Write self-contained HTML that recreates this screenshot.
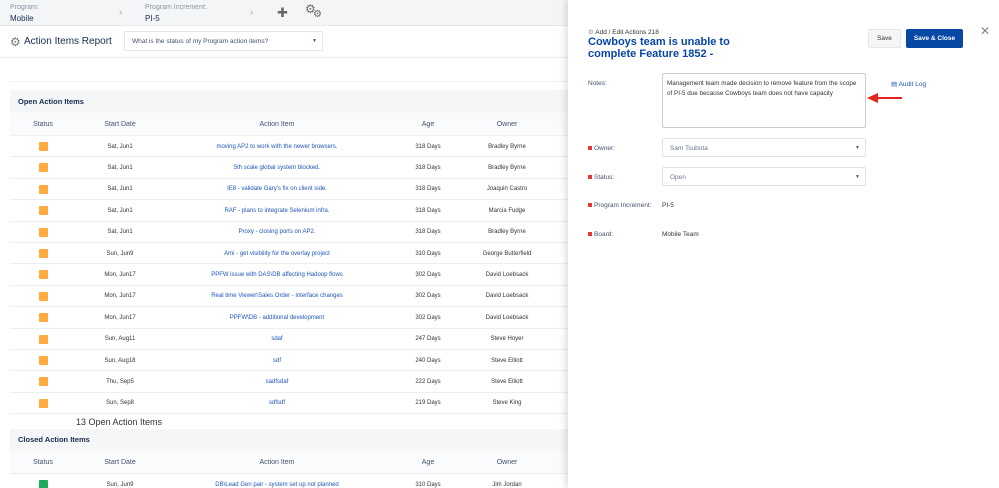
<!DOCTYPE html>
<html><head><style>
*{margin:0;padding:0;box-sizing:border-box}
html,body{width:999px;height:488px;overflow:hidden}
body{font-family:"Liberation Sans",sans-serif;background:#fff;position:relative;color:#172b4d}
.top{position:absolute;left:0;top:0;width:999px;height:26px;background:#f4f5f7;border-bottom:1px solid #e6e8eb}
.lbl{position:absolute;font-size:7px;color:#8a94a3}
.val{position:absolute;font-size:8px;color:#172b4d}
.abs{position:absolute}
.sec{position:absolute;left:10px;width:560px;background:#f5f6f7;font-size:7.5px;font-weight:bold;padding-left:8px;color:#172b4d}
.row{position:absolute;left:10px;width:560px;height:21.4px;border-bottom:1px solid #eceef0;background:#fff;font-size:6px;color:#333}
.row span{position:absolute;top:7.5px;transform:translateX(-50%);white-space:nowrap}
.row .a{color:#1f56b8}
.hd{font-size:7px;color:#42526e}
.hd span{top:8px}
.sq{position:absolute;left:29px;top:6px;width:9px;height:9px;border-radius:1px;background:#ffab40}
.panel{position:absolute;left:568px;top:0;width:431px;height:488px;background:#fff;box-shadow:-3px 0 6px rgba(0,0,0,.12)}
.fl{position:absolute;font-size:6.5px;color:#42526e}
.fl i{display:inline-block;width:4px;height:4px;background:#e53935;margin-right:2px}
.inp{position:absolute;left:662px;width:204px;height:19px;border:1px solid #dfe1e6;border-radius:2px;font-size:6.5px;color:#6b778c;padding:6px 0 0 7px}
.inp:after{content:"▼";position:absolute;right:5px;top:6px;font-size:5px;color:#555}
</style></head><body>
<div class="top">
<div class="lbl" style="left:10px;top:4px">Program:</div>
<div class="val" style="left:10px;top:14px">Mobile</div>
<div class="abs" style="left:119px;top:7px;color:#aaa;font-size:10px">›</div>
<div class="lbl" style="left:145px;top:4px">Program Increment:</div>
<div class="val" style="left:145px;top:14px">PI-5</div>
<div class="abs" style="left:250px;top:7px;color:#aaa;font-size:10px">›</div>
<div class="abs" style="left:277px;top:6px;color:#666;font-size:13px;line-height:13px">✚</div>
<div class="abs" style="left:305px;top:2px;color:#666;font-size:12px">⚙</div>
<div class="abs" style="left:313px;top:9px;color:#666;font-size:10px">⚙</div>
</div>
<div class="abs" style="left:10px;top:35px;font-size:12px;color:#777">⚙</div>
<div class="abs" style="left:24px;top:36px;font-size:10px;color:#172b4d">Action Items Report</div>
<div class="abs" style="left:124px;top:31px;width:199px;height:20px;border:1px solid #e3e5e8;border-radius:2px;font-size:6.5px;color:#42526e;padding:6px 0 0 7px">What is the status of my Program action items?<span style="position:absolute;right:5px;top:6px;font-size:5px">▼</span></div>
<div class="abs" style="left:0;top:57px;width:570px;height:1px;background:#eee"></div>
<div class="abs" style="left:10px;top:81px;width:560px;height:1px;background:#eef0f2"></div>

<div class="sec" style="top:90px;height:23px;line-height:23px">Open Action Items</div>
<div class="row hd" style="top:113px;height:23px;background:#fafbfc"><span style="left:33px">Status</span><span style="left:110px">Start Date</span><span style="left:267px">Action Item</span><span style="left:418px">Age</span><span style="left:497px">Owner</span></div>

<div class="row" style="top:136px"><div class="sq"></div><span style="left:110px">Sat, Jun1</span><span class="a" style="left:267px">moving AP2 to work with the newer browsers.</span><span style="left:418px">318 Days</span><span style="left:497px">Bradley Byrne</span></div>
<div class="row" style="top:157.4px"><div class="sq"></div><span style="left:110px">Sat, Jun1</span><span class="a" style="left:267px">5th scale global system blocked.</span><span style="left:418px">318 Days</span><span style="left:497px">Bradley Byrne</span></div>
<div class="row" style="top:178.8px"><div class="sq"></div><span style="left:110px">Sat, Jun1</span><span class="a" style="left:267px">IE8 - validate Gary's fix on client side.</span><span style="left:418px">318 Days</span><span style="left:497px">Joaquin Castro</span></div>
<div class="row" style="top:200.2px"><div class="sq"></div><span style="left:110px">Sat, Jun1</span><span class="a" style="left:267px">RAF - plans to integrate Selenium infra.</span><span style="left:418px">318 Days</span><span style="left:497px">Marcia Fudge</span></div>
<div class="row" style="top:221.6px"><div class="sq"></div><span style="left:110px">Sat, Jun1</span><span class="a" style="left:267px">Proxy - closing ports on AP2.</span><span style="left:418px">318 Days</span><span style="left:497px">Bradley Byrne</span></div>
<div class="row" style="top:243px"><div class="sq"></div><span style="left:110px">Sun, Jun9</span><span class="a" style="left:267px">Ami - get visibility for the overlay project</span><span style="left:418px">310 Days</span><span style="left:497px">George Butterfield</span></div>
<div class="row" style="top:264.4px"><div class="sq"></div><span style="left:110px">Mon, Jun17</span><span class="a" style="left:267px">PPFW issue with DAS\DB affecting Hadoop flows</span><span style="left:418px">302 Days</span><span style="left:497px">David Loebsack</span></div>
<div class="row" style="top:285.8px"><div class="sq"></div><span style="left:110px">Mon, Jun17</span><span class="a" style="left:267px">Real time Viewer\Sales Order - interface changes</span><span style="left:418px">302 Days</span><span style="left:497px">David Loebsack</span></div>
<div class="row" style="top:307.2px"><div class="sq"></div><span style="left:110px">Mon, Jun17</span><span class="a" style="left:267px">PPFW\DB - additional development</span><span style="left:418px">302 Days</span><span style="left:497px">David Loebsack</span></div>
<div class="row" style="top:328.6px"><div class="sq"></div><span style="left:110px">Sun, Aug11</span><span class="a" style="left:267px">sdaf</span><span style="left:418px">247 Days</span><span style="left:497px">Steve Hoyer</span></div>
<div class="row" style="top:350px"><div class="sq"></div><span style="left:110px">Sun, Aug18</span><span class="a" style="left:267px">sdf</span><span style="left:418px">240 Days</span><span style="left:497px">Steve Elliott</span></div>
<div class="row" style="top:371.4px"><div class="sq"></div><span style="left:110px">Thu, Sep5</span><span class="a" style="left:267px">sadfsdaf</span><span style="left:418px">222 Days</span><span style="left:497px">Steve Elliott</span></div>
<div class="row" style="top:392.8px"><div class="sq"></div><span style="left:110px">Sun, Sep8</span><span class="a" style="left:267px">sdfsdf</span><span style="left:418px">219 Days</span><span style="left:497px">Steve King</span></div>
<div class="abs" style="left:76px;top:417px;font-size:9px;color:#333">13 Open Action Items</div>

<div class="sec" style="top:429px;height:22px;line-height:22px">Closed Action Items</div>
<div class="row hd" style="top:451px;height:23px;background:#fafbfc"><span style="left:33px">Status</span><span style="left:110px">Start Date</span><span style="left:267px">Action Item</span><span style="left:418px">Age</span><span style="left:497px">Owner</span></div>
<div class="row" style="top:474px"><div class="sq" style="background:#1faa59"></div><span style="left:110px">Sun, Jun9</span><span class="a" style="left:267px">DB\Lead Gen pair - system set up not planned</span><span style="left:418px">310 Days</span><span style="left:497px">Jim Jordan</span></div>

<div class="panel"></div>
<div class="abs" style="left:588px;top:28px;font-size:6.5px;color:#333"><span style="color:#999">⚙</span> Add / Edit Actions 218</div>
<div class="abs" style="left:588px;top:36px;font-size:11px;font-weight:bold;color:#0747a6;line-height:12px;width:170px">Cowboys team is unable to complete Feature 1852 -</div>
<div class="abs" style="left:868px;top:29px;width:33px;height:19px;background:#f4f5f7;border:1px solid #e6e6e6;border-radius:2px;font-size:6.5px;color:#333;text-align:center;line-height:17px">Save</div>
<div class="abs" style="left:906px;top:29px;width:57px;height:19px;background:#0747a6;border-radius:2px;font-size:6.5px;font-weight:bold;color:#fff;text-align:center;line-height:19px">Save &amp; Close</div>
<div class="abs" style="left:980px;top:24px;font-size:12px;color:#888">✕</div>
<div class="fl" style="left:588px;top:80px">Notes:</div>
<div class="abs" style="left:662px;top:73px;width:204px;height:55px;border:1px solid #c9ccd1;border-radius:2px;font-size:6.3px;color:#333;padding:5px 4px;line-height:10px">Management team made decision to remove feature from the scope of PI-5 due because Cowboys team does not have capacity</div>
<div class="abs" style="left:891px;top:80px;font-size:6.5px;color:#1f56b8">▤ Audit Log</div>
<div class="abs" style="left:878px;top:97px;width:24px;height:2px;background:#e8231b"></div>
<div class="abs" style="left:867px;top:93px;width:0;height:0;border-top:5px solid transparent;border-bottom:5px solid transparent;border-right:11px solid #e8231b"></div>
<div class="fl" style="left:588px;top:145px"><i></i>Owner:</div>
<div class="inp" style="top:138px">Sam Tsubota</div>
<div class="fl" style="left:588px;top:174px"><i></i>Status:</div>
<div class="inp" style="top:167px">Open</div>
<div class="fl" style="left:588px;top:202px"><i></i>Program Increment:</div>
<div class="abs" style="left:662px;top:202px;font-size:6.5px;color:#333">PI-5</div>
<div class="fl" style="left:588px;top:231px"><i></i>Board:</div>
<div class="abs" style="left:662px;top:231px;font-size:6.5px;color:#333">Mobile Team</div>
</body></html>
